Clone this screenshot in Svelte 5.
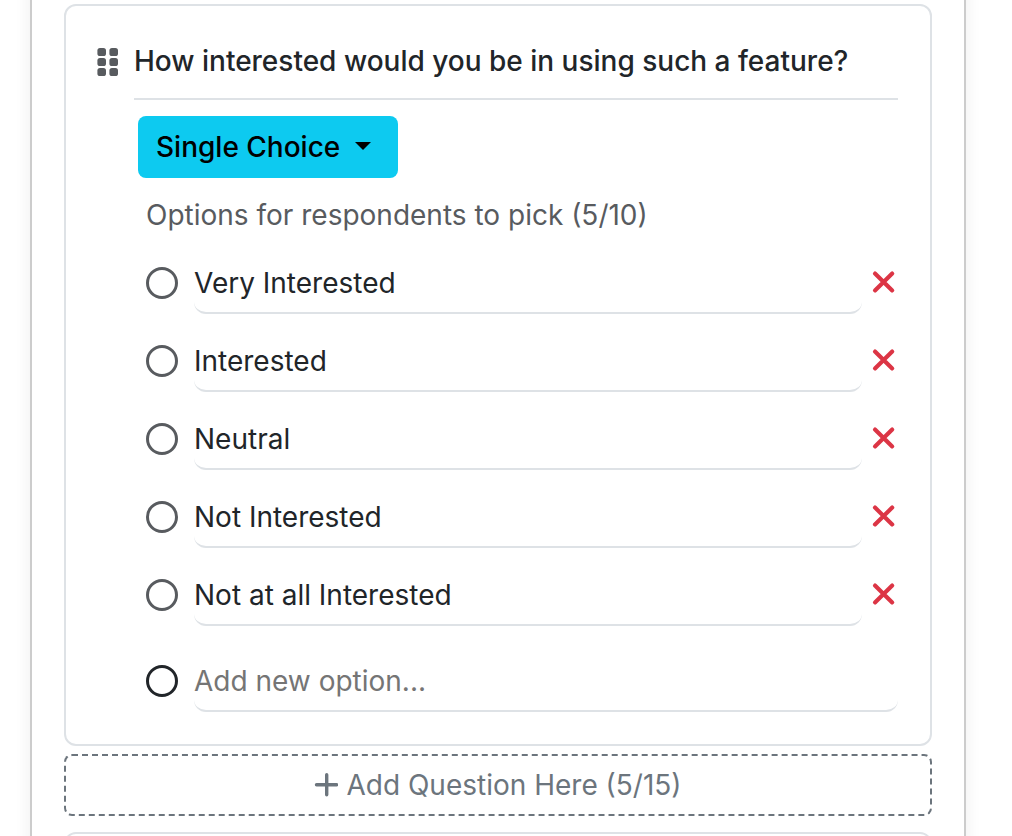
<script lang="ts">
	const MAX_OPTIONS = 10;
	const MAX_QUESTIONS = 15;

	let title = $state("How interested would you be in using such a feature?");
	let questionType = $state("single");
	let questionCount = $state(5);
	let newOption = $state("");
	let options = $state([
		{ text: "Very Interested" },
		{ text: "Interested" },
		{ text: "Neutral" },
		{ text: "Not Interested" },
		{ text: "Not at all Interested" },
	]);

	function removeOption(index: number) {
		options.splice(index, 1);
	}

	function addOption() {
		const text = newOption.trim();
		if (!text || options.length >= MAX_OPTIONS) return;
		options.push({ text });
		newOption = "";
	}

	function addQuestion() {
		if (questionCount < MAX_QUESTIONS) questionCount++;
	}
</script>

<div class="page">
	<main class="survey">
		<section class="question">
			<div class="question-header">
				<svg class="grip" viewBox="0 0 28 28" aria-hidden="true">
					{#each [0, 10, 20] as y}
						<rect x="3.4" {y} width="8.6" height="8" rx="2.6" />
						<rect x="15.4" {y} width="8.6" height="8" rx="2.6" />
					{/each}
				</svg>
				<input class="title" type="text" aria-label="Question" bind:value={title} />
			</div>

			<div class="question-body">
				<div class="type-picker">
					<select aria-label="Question type" bind:value={questionType}>
						<option value="single">Single Choice</option>
						<option value="multi">Multi Choice</option>
						<option value="text">Text</option>
					</select>
				</div>

				<div class="options">
					<p class="hint">Options for respondents to pick ({options.length}/{MAX_OPTIONS})</p>

					{#each options as option, i}
						<div class="option">
							<input class="radio" type="radio" name="answer" aria-label={option.text} />
							<input class="field" type="text" aria-label="Option {i + 1}" bind:value={option.text} />
							<button class="btn-remove" type="button" aria-label="Remove option" onclick={() => removeOption(i)}>
								<svg viewBox="0 0 28 28" aria-hidden="true">
									<path d="M5 4.6 L22.2 21.4 M22.2 4.6 L5 21.4" />
								</svg>
							</button>
						</div>
					{/each}

					<div class="option option-new">
						<input class="radio" type="radio" name="answer" aria-label="New option" />
						<input
							class="field"
							type="text"
							placeholder="Add new option..."
							aria-label="Add new option"
							bind:value={newOption}
							onchange={addOption}
						/>
					</div>
				</div>
			</div>
		</section>

		<button class="btn-add" type="button" onclick={addQuestion}>
			<svg viewBox="0 0 24 24" aria-hidden="true">
				<path d="M12.7 1.8 V21.8 M2.5 11.8 H22.7" />
			</svg>
			<span>Add Question Here ({questionCount}/{MAX_QUESTIONS})</span>
		</button>

		<section class="question question-next"></section>
	</main>
</div>

<style>
	:global(body) {
		margin: 0;
		background: #fff;
	}

	.page {
		box-sizing: border-box;
		height: 100vh;
		overflow: hidden;
		padding: 0 46px 0 30px;
		font-family: Inter, "Liberation Sans", sans-serif;
		font-size: 28px;
		line-height: 42px;
		color: #212529;
	}

	.survey {
		margin-top: -20px;
		padding: 24px 32px;
		border: 2px solid #ccc;
		border-top: none;
		box-shadow: 0 0 16px rgba(0, 0, 0, 0.07);
	}

	.question {
		padding: 32px 32px 32px 28px;
		border: 2px solid #dee2e6;
		border-radius: 12px;
	}

	.question-header {
		display: flex;
		align-items: flex-start;
		gap: 12px;
	}

	.grip {
		flex: none;
		width: 28px;
		height: 28px;
		margin-top: 10px;
		fill: #585b5f;
		cursor: grab;
	}

	input,
	select,
	button {
		box-sizing: border-box;
		margin: 0;
		font: inherit;
		color: inherit;
	}

	input[type="text"] {
		flex: 1;
		min-width: 0;
		border: none;
		border-bottom: 2px solid #dee2e6;
		background: none;
		outline: none;
	}

	.title {
		height: 62px;
		padding: 0 0 14px;
		font-weight: 500;
	}

	.question-body {
		padding: 16px 0 0 44px;
	}

	.type-picker {
		position: relative;
		display: inline-block;
		vertical-align: top;
	}

	.type-picker::after {
		content: "";
		position: absolute;
		top: 26px;
		right: 27px;
		border: 8px solid transparent;
		border-top-color: #000;
		border-bottom: none;
		pointer-events: none;
	}

	.type-picker select {
		appearance: none;
		height: 62px;
		padding: 0 57px 0 18px;
		border: none;
		border-radius: 8px;
		background: #0dcaf0;
		color: #000;
		font-weight: 500;
		cursor: pointer;
	}

	.options {
		display: flex;
		flex-direction: column;
		gap: 16px;
		padding: 16px 0 0 8px;
	}

	.hint {
		margin: 0;
		color: #585b5f;
	}

	.option {
		display: flex;
		align-items: center;
	}

	.option-new {
		margin-top: 8px;
	}

	.radio {
		appearance: none;
		flex: none;
		width: 32px;
		height: 32px;
		margin-right: 16px;
		border: 3px solid #585b5f;
		border-radius: 50%;
	}

	.radio:checked {
		background: #585b5f;
		box-shadow: inset 0 0 0 5px #fff;
	}

	.option-new .radio {
		border-color: #212529;
	}

	.option .field {
		height: 62px;
		padding: 2px 0 0;
		border-radius: 12px;
	}

	.field::placeholder {
		color: #757575;
		opacity: 1;
	}

	.btn-remove {
		flex: none;
		display: flex;
		margin-left: 8px;
		padding: 0;
		border: none;
		background: none;
		cursor: pointer;
	}

	.btn-remove svg {
		width: 28px;
		height: 28px;
		fill: none;
		stroke: #dc3545;
		stroke-width: 4.2;
		stroke-linecap: round;
	}

	.btn-add {
		display: flex;
		align-items: center;
		justify-content: center;
		gap: 8px;
		width: 100%;
		height: 62px;
		margin: 8px 0 16px;
		border: 2px dashed #6c757d;
		border-radius: 8px;
		background: none;
		color: #6c757d;
		cursor: pointer;
	}

	.btn-add svg {
		width: 24px;
		height: 24px;
		fill: none;
		stroke: currentColor;
		stroke-width: 3.4;
		stroke-linecap: round;
	}
</style>
